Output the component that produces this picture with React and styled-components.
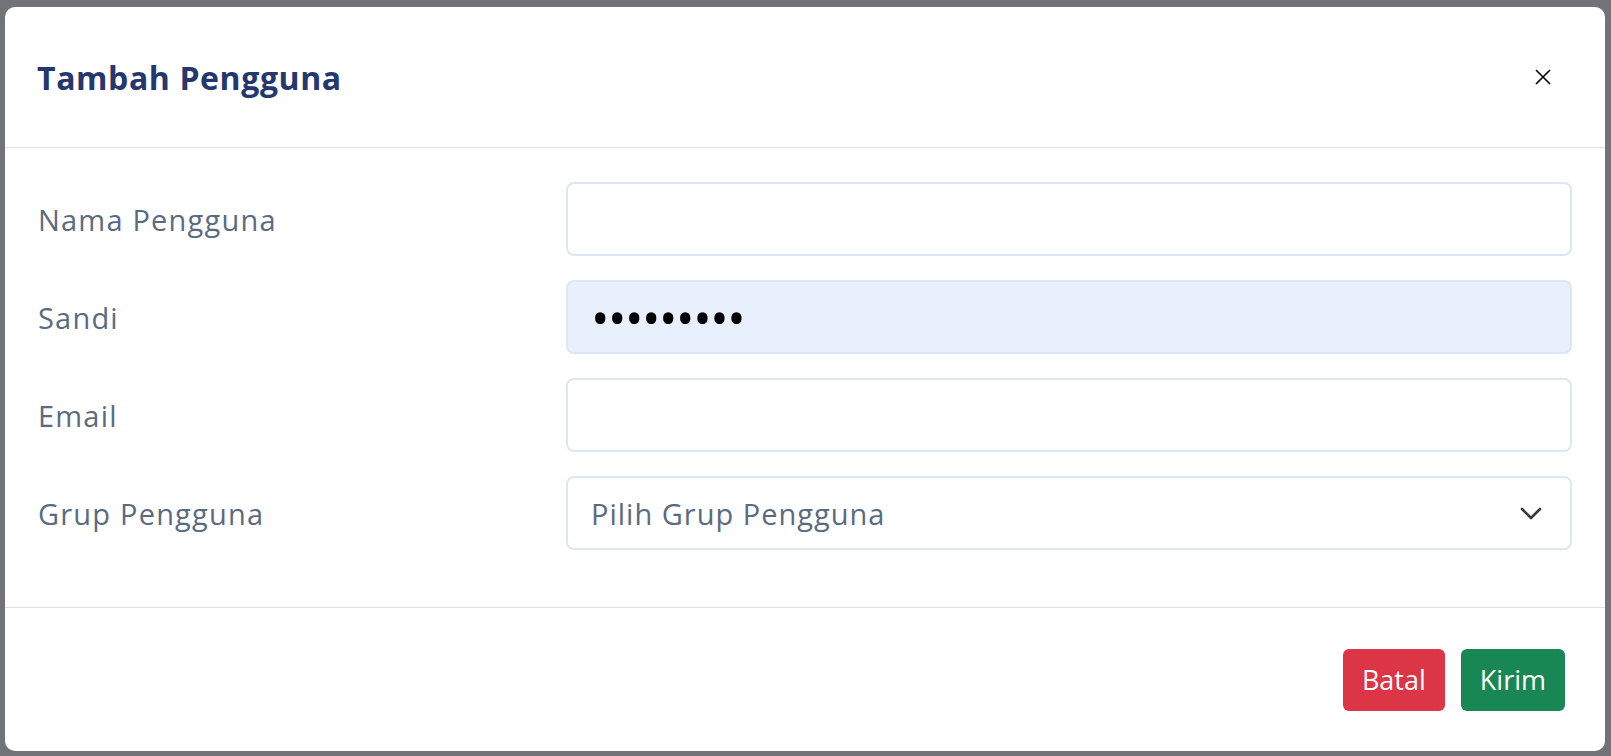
import styled, { createGlobalStyle } from 'styled-components';

const Global = createGlobalStyle`
    html, body {
        margin: 0;
        background: #717378;
    }
    * { box-sizing: border-box; }
`;

const Backdrop = styled.div`
    width: 1611px;
    height: 756px;
    padding: 7px 6px 5px 5px;
    font-family: "Open Sans", "Noto Sans", sans-serif;
`;

const Modal = styled.div`
    width: 1600px;
    height: 744px;
    background: #fff;
    border-radius: 10px;
    display: flex;
    flex-direction: column;
    overflow: hidden;
`;

const Header = styled.div`
    height: 141px;
    flex: 0 0 141px;
    display: flex;
    align-items: center;
    justify-content: space-between;
    padding: 0 42px 0 32px;
    border-bottom: 1px solid #dee2e6;
`;

const Title = styled.h5`
    margin: 0;
    font-size: 32px;
    letter-spacing: 0.6px;
    font-weight: 700;
    color: #24386e;
`;

const Close = styled.button`
    width: 40px;
    height: 40px;
    border: 0;
    background: transparent;
    display: flex;
    align-items: center;
    justify-content: center;
    padding: 0;
    cursor: pointer;
`;

const Body = styled.div`
    flex: 1;
    padding: 34px 33px 0;
    display: grid;
    grid-template-columns: 528px 1fr;
    grid-auto-rows: 74px;
    row-gap: 24px;
    align-items: center;
    border-bottom: 1px solid #dee2e6;
`;

const Label = styled.label`
    font-size: 29px;
    letter-spacing: 1.2px;
    color: #5b6b7f;
`;

const Field = styled.div`
    height: 74px;
    border: 2px solid #dde6f1;
    border-radius: 8px;
    background: ${p => (p.$filled ? '#e8f0fe' : '#fff')};
    display: flex;
    align-items: center;
    justify-content: space-between;
    padding: 0 28px 0 23px;
`;

const Input = styled.input`
    border: 0;
    outline: 0;
    background: transparent;
    width: 100%;
    height: 100%;
    font-family: inherit;
    font-size: ${p => (p.type === 'password' ? '49px' : '29px')};
    letter-spacing: ${p => (p.type === 'password' ? '-1.4px' : '0')};
    color: #000;
    padding: 0;
`;

const Placeholder = styled.span`
    font-size: 29px;
    letter-spacing: 1px;
    color: #5b6b7f;
`;

const Footer = styled.div`
    flex: 0 0 143px;
    display: flex;
    align-items: center;
    justify-content: flex-end;
    gap: 16px;
    padding-right: 40px;
`;

const Button = styled.button`
    height: 62px;
    padding: 0 19px;
    border: 0;
    border-radius: 6px;
    font-family: inherit;
    font-size: 27px;
    color: #fff;
    background: ${p => (p.$variant === 'danger' ? '#dc3545' : '#198754')};
    cursor: pointer;
`;

export default function App() {
    return <Backdrop>
        <Global />
        <Modal>
            <Header>
                <Title>Tambah Pengguna</Title>
                <Close aria-label="Close">
                    <svg width="16" height="16" viewBox="0 0 16 16">
                        <path d="M1 1 L15 15 M15 1 L1 15" stroke="#000" strokeWidth="1.6" />
                    </svg>
                </Close>
            </Header>
            <Body>
                <Label>Nama Pengguna</Label>
                <Field><Input type="text" /></Field>
                <Label>Sandi</Label>
                <Field $filled><Input type="password" defaultValue="123456789" /></Field>
                <Label>Email</Label>
                <Field><Input type="email" /></Field>
                <Label>Grup Pengguna</Label>
                <Field>
                    <Placeholder>Pilih Grup Pengguna</Placeholder>
                    <svg width="22" height="13" viewBox="0 0 22 13">
                        <path d="M2 2 L11 11 L20 2" fill="none" stroke="#343a40" strokeWidth="2.6" strokeLinecap="round" strokeLinejoin="round" />
                    </svg>
                </Field>
            </Body>
            <Footer>
                <Button $variant="danger">Batal</Button>
                <Button>Kirim</Button>
            </Footer>
        </Modal>
    </Backdrop>
}
